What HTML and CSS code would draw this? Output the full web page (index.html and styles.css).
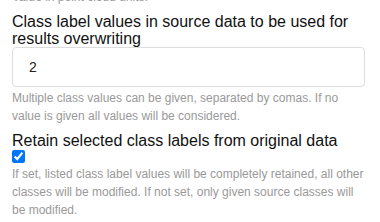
FILE: index.html
```html
<!DOCTYPE html>
<html lang="en">
<head>
  <meta charset="UTF-8">
  <title>Reclassify</title>
  <link rel="stylesheet" href="styles.css">
</head>
<body>

  <div class="form">
    <p class="help">Value in point cloud units.</p>

    <!-- Source class values -->
    <div class="field">
      <label class="label" for="classValues">Class label values in source data to be used for results overwriting</label>
      <input type="text" id="classValues" class="input" value="2">
      <p class="help">Multiple class values can be given, separated by comas. If no value is given all values will be considered.</p>
    </div>

    <!-- Retain checkbox -->
    <div class="field">
      <label class="label" for="retain">Retain selected class labels from original data</label>
      <input type="checkbox" id="retain" class="check" checked>
      <p class="help">If set, listed class label values will be completely retained, all other classes will be modified. If not set, only given source classes will be modified.</p>
    </div>
  </div>

</body>
</html>
```

FILE: styles.css
```css
body {
  margin: 0;
  padding: 0;
  background-color: #fff;
  font-family: "Liberation Sans", Arial, sans-serif;
  overflow: hidden;
}

.form {
  margin-top: -14px;
  padding: 0 15px 0 12px;
}

.field {
  margin-top: 7px;
}

.label {
  display: block;
  font-size: 16px;
  line-height: 17px;
  color: #111;
}

.input {
  display: block;
  box-sizing: border-box;
  width: 100%;
  height: 40px;
  margin-top: 0;
  padding: 0 16px;
  border: 1px solid #ddd;
  border-radius: 4px;
  font-family: inherit;
  font-size: 14px;
  color: #222;
}

.check {
  display: block;
  width: 13px;
  height: 13px;
  margin: 1px 0 0 0;
  accent-color: #0075ff;
}

.help {
  margin: 2px 0 0 0;
  font-size: 12px;
  line-height: 18px;
  color: #999;
}
```
